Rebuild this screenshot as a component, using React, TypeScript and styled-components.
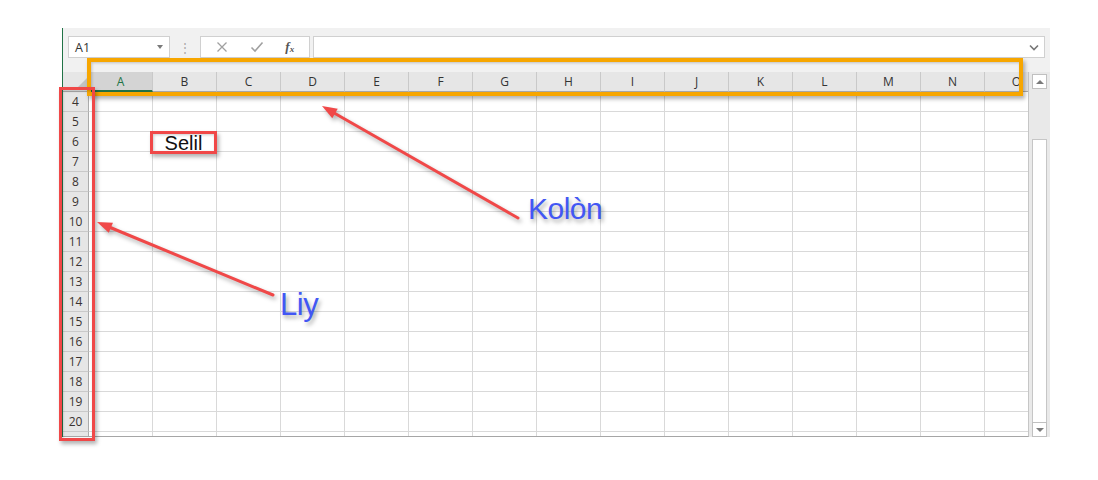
import React from 'react';
import styled, { createGlobalStyle } from 'styled-components';

const Global = createGlobalStyle`
  html, body { margin: 0; padding: 0; background: #ffffff; }
  body { font-family: "Open Sans", "Liberation Sans", Arial, sans-serif; }
  * { box-sizing: border-box; }
`;

const Page = styled.div`
  position: relative;
  width: 1098px;
  height: 480px;
  padding: 28px 0 0 62px;
  overflow: hidden;
`;

const Window = styled.div`
  width: 988px;
  height: 409px;
  background: #f1f1f1;
  border-left: 1px solid #217346;
  display: flex;
  flex-direction: column;
`;

const FormulaBar = styled.div`
  display: flex;
  align-items: stretch;
  height: 22px;
  margin: 8px 5px 0 5px;
`;

const NameBox = styled.div`
  width: 102px;
  background: #fff;
  border: 1px solid #d0d0d0;
  display: flex;
  align-items: center;
  justify-content: space-between;
  padding: 0 6px 0 6px;
  font-size: 12.5px;
  color: #333;
`;

const Caret = styled.span`
  width: 0;
  height: 0;
  border-left: 3.5px solid transparent;
  border-right: 3.5px solid transparent;
  border-top: 4px solid #7a7a7a;
`;

const Grip = styled.div`
  width: 30px;
  display: flex;
  align-items: center;
  justify-content: center;
  color: #a8a8a8;
  font-size: 12px;
`;

const FuncBox = styled.div`
  width: 110px;
  background: #fff;
  border: 1px solid #d0d0d0;
  display: flex;
  align-items: center;
  justify-content: space-around;
  padding: 0 4px;
`;

const Fx = styled.span`
  font-family: "Liberation Serif", "Times New Roman", serif;
  font-style: italic;
  font-weight: bold;
  font-size: 13px;
  color: #555;
  sub { font-size: 9px; vertical-align: -1px; }
`;

const FormulaInput = styled.div`
  flex: 1;
  margin-left: 3px;
  background: #fff;
  border: 1px solid #d0d0d0;
  display: flex;
  align-items: center;
  justify-content: flex-end;
  padding-right: 5px;
`;

const SheetArea = styled.div`
  display: flex;
  margin-top: 14px;
  height: 365px;
`;

const Sheet = styled.div`
  width: 966px;
  height: 365px;
  overflow: hidden;
  display: grid;
  grid-template-columns: 26px repeat(15, 64px);
  grid-auto-rows: 20px;
  border-right: 1px solid #c6c6c6;
  border-bottom: 1px solid #a6a6a6;
  background: #fff;
  font-size: 12px;
`;

const Corner = styled.div`
  position: relative;
  background: #e6e6e6;
  border-right: 1px solid #ababab;
  border-bottom: 1px solid #ababab;
  overflow: hidden;
  &::after {
    content: '';
    position: absolute;
    right: 1px;
    bottom: 1px;
    width: 0;
    height: 0;
    border-left: 12px solid transparent;
    border-bottom: 12px solid #c2c2c2;
  }
`;

const ColHead = styled.div<{ $active?: boolean }>`
  background: ${p => (p.$active ? '#d4d4d4' : '#e6e6e6')};
  border-right: 1px solid #c9c9c9;
  border-bottom: ${p => (p.$active ? '2px solid #217346' : '1px solid #ababab')};
  color: ${p => (p.$active ? '#217346' : '#333')};
  display: flex;
  align-items: center;
  justify-content: center;
  padding-top: ${p => (p.$active ? '1px' : '0')};
`;

const RowHead = styled.div`
  background: #e6e6e6;
  border-right: 1px solid #ababab;
  border-bottom: 1px solid #c9c9c9;
  color: #3a3330;
  display: flex;
  align-items: center;
  justify-content: center;
`;

const Cell = styled.div`
  border-right: 1px solid #d9d9d9;
  border-bottom: 1px solid #d9d9d9;
`;

const Scrollbar = styled.div`
  width: 21px;
  height: 365px;
  background: #e9e9e9;
  display: flex;
  flex-direction: column;
  padding: 2px 3px 0 3px;
`;

const ScrollButton = styled.div<{ $down?: boolean }>`
  height: 15px;
  background: #fff;
  border: 1px solid #c0c0c0;
  display: flex;
  align-items: center;
  justify-content: center;
  &::before {
    content: '';
    width: 0;
    height: 0;
    border-left: 4px solid transparent;
    border-right: 4px solid transparent;
    ${p => (p.$down ? 'border-top: 4px solid #7a7a7a;' : 'border-bottom: 4px solid #7a7a7a;')}
  }
`;

const Track = styled.div<{ $h: number }>`
  height: ${p => p.$h}px;
`;

const Thumb = styled.div`
  flex: 1;
  background: #fff;
  border: 1px solid #c6c6c6;
  border-bottom: none;
`;

const Overlay = styled.div`
  position: absolute;
  inset: 0;
  pointer-events: none;
`;

const Box = styled.div<{ $c: string; $x: number; $y: number; $w: number; $h: number; $b: number }>`
  position: absolute;
  left: ${p => p.$x}px;
  top: ${p => p.$y}px;
  width: ${p => p.$w}px;
  height: ${p => p.$h}px;
  border: ${p => p.$b}px solid ${p => p.$c};
  box-shadow: 2px 3px 4px rgba(0, 0, 0, 0.3), inset 1px 1px 3px rgba(0, 0, 0, 0.2);
  display: flex;
  align-items: center;
  justify-content: center;
`;

const CellText = styled.span`
  font-family: "Liberation Sans", Arial, sans-serif;
  font-size: 20px;
  color: #111;
  line-height: 1;
  margin-top: 1px;
`;

const Label = styled.div<{ $x: number; $y: number; $s: number }>`
  position: absolute;
  left: ${p => p.$x}px;
  top: ${p => p.$y}px;
  font-family: "Liberation Sans", Arial, sans-serif;
  font-size: ${p => p.$s}px;
  line-height: 1;
  color: #4257f4;
  text-shadow: 2px 3px 4px rgba(0, 0, 0, 0.35);
  letter-spacing: -0.5px;
`;

const Arrows = styled.svg`
  position: absolute;
  left: 0;
  top: 0;
  filter: drop-shadow(2px 3px 2px rgba(0, 0, 0, 0.3));
`;

const COLS = ['A', 'B', 'C', 'D', 'E', 'F', 'G', 'H', 'I', 'J', 'K', 'L', 'M', 'N', 'O'];
const ROWS = Array.from({ length: 18 }, (_, i) => i + 4);

function Arrow({ x1, y1, x2, y2 }: { x1: number; y1: number; x2: number; y2: number }) {
  const ang = Math.atan2(y2 - y1, x2 - x1);
  const len = 15;
  const half = 5.5;
  const bx = x2 - len * Math.cos(ang);
  const by = y2 - len * Math.sin(ang);
  const px = -Math.sin(ang) * half;
  const py = Math.cos(ang) * half;
  return (
    <g>
      <line x1={x1} y1={y1} x2={bx} y2={by} stroke="#f04848" strokeWidth={3} strokeLinecap="round" />
      <polygon points={`${x2},${y2} ${bx + px},${by + py} ${bx - px},${by - py}`} fill="#f04848" />
    </g>
  );
}

export default function App() {
  return (
    <>
      <Global />
      <Page>
        <Window>
          <FormulaBar>
            <NameBox>
              <span>A1</span>
              <Caret />
            </NameBox>
            <Grip>⋮</Grip>
            <FuncBox>
              <svg width="12" height="12" viewBox="0 0 12 12">
                <path d="M1.5 1.5 L10.5 10.5 M10.5 1.5 L1.5 10.5" stroke="#a0a0a0" strokeWidth="1.3" />
              </svg>
              <svg width="14" height="12" viewBox="0 0 14 12">
                <path d="M1.5 6.5 L5 10 L12.5 1.5" stroke="#a0a0a0" strokeWidth="1.6" fill="none" />
              </svg>
              <Fx>
                f<sub>x</sub>
              </Fx>
            </FuncBox>
            <FormulaInput>
              <svg width="10" height="7" viewBox="0 0 10 7">
                <path d="M1 1.5 L5 5.5 L9 1.5" stroke="#777" strokeWidth="1.6" fill="none" />
              </svg>
            </FormulaInput>
          </FormulaBar>
          <SheetArea>
            <Sheet>
              <Corner />
              {COLS.map(c => (
                <ColHead key={c} $active={c === 'A'}>
                  {c}
                </ColHead>
              ))}
              {ROWS.map(r => (
                <React.Fragment key={r}>
                  <RowHead>{r <= 20 ? r : ''}</RowHead>
                  {COLS.map(c => (
                    <Cell key={c} />
                  ))}
                </React.Fragment>
              ))}
            </Sheet>
            <Scrollbar>
              <ScrollButton />
              <Track $h={50} />
              <Thumb />
              <ScrollButton $down />
            </Scrollbar>
          </SheetArea>
        </Window>
        <Overlay>
          <Box $c="#f7a600" $x={87} $y={58} $w={936} $h={38} $b={4} />
          <Box $c="#f04848" $x={59} $y={87} $w={36} $h={354} $b={3.5} />
          <Box $c="#f04848" $x={150} $y={131} $w={67} $h={23} $b={3}>
            <CellText>Selil</CellText>
          </Box>
          <Arrows width={1098} height={480} viewBox="0 0 1098 480">
            <Arrow x1={518} y1={218} x2={322} y2={106} />
            <Arrow x1={273} y1={295} x2={97} y2={222} />
          </Arrows>
          <Label $x={528} $y={194} $s={30}>Kolòn</Label>
          <Label $x={280} $y={289} $s={31}>Liy</Label>
        </Overlay>
      </Page>
    </>
  );
}
